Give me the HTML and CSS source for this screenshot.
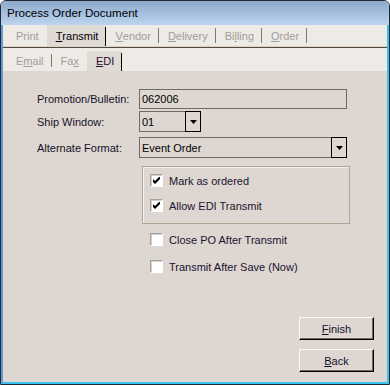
FILE: index.html
```html
<!DOCTYPE html>
<html lang="en">
<head>
    <meta charset="UTF-8">
    <meta name="viewport" content="width=device-width, initial-scale=1.0">
    <title>Process Order Document</title>
    <link rel="stylesheet" href="styles.css">
</head>
<body>
    <div class="window">
        <div class="titlebar">Process Order Document</div>
        <div class="frame">
            <div class="tabs tabs-main">
                <span class="tab disabled nosep">Print</span>
                <span class="tab active"><u>T</u>ransmit</span>
                <span class="tab disabled"><u>V</u>endor</span>
                <span class="tab disabled"><u>D</u>elivery</span>
                <span class="tab disabled">Bi<u>l</u>ling</span>
                <span class="tab disabled"><u>O</u>rder</span>
            </div>
            <div class="tabs-rule"></div>
            <div class="tabs tabs-sub">
                <span class="tab disabled">E<u>m</u>ail</span>
                <span class="tab disabled nosep">Fa<u>x</u></span>
                <span class="tab active"><u>E</u>DI</span>
            </div>

            <div class="content">
                <div class="row">
                    <label class="label">Promotion/Bulletin:</label>
                    <div class="field field-wide">062006</div>
                </div>
                <div class="row row-ship">
                    <label class="label">Ship Window:</label>
                    <div class="select select-short">
                        <span class="value">01</span>
                        <span class="drop"><svg width="7" height="4" viewBox="0 0 7 4"><path d="M0 0h7L3.5 4z" fill="#000"/></svg></span>
                    </div>
                </div>
                <div class="row row-format">
                    <label class="label">Alternate Format:</label>
                    <div class="select select-wide">
                        <span class="value">Event Order</span>
                        <span class="drop"><svg width="7" height="4" viewBox="0 0 7 4"><path d="M0 0h7L3.5 4z" fill="#000"/></svg></span>
                    </div>
                </div>

                <div class="group">
                    <div class="check">
                        <span class="box"><svg width="7" height="7" viewBox="0 0 7 7"><path d="M0 2v3l2 2 5-5v-3l-5 5z" fill="#000"/></svg></span>
                        <span>Mark as ordered</span>
                    </div>
                    <div class="check">
                        <span class="box"><svg width="7" height="7" viewBox="0 0 7 7"><path d="M0 2v3l2 2 5-5v-3l-5 5z" fill="#000"/></svg></span>
                        <span>Allow EDI Transmit</span>
                    </div>
                </div>

                <div class="check check-loose first">
                    <span class="box"></span>
                    <span>Close PO After Transmit</span>
                </div>
                <div class="check check-loose">
                    <span class="box"></span>
                    <span>Transmit After Save (Now)</span>
                </div>

                <div class="actions">
                    <button class="btn"><u>F</u>inish</button>
                    <button class="btn"><u>B</u>ack</button>
                </div>
            </div>
        </div>
    </div>
</body>
</html>
```

FILE: styles.css
```css
body {
    margin: 0;
    font-family: "Liberation Sans", Arial, sans-serif;
    font-size: 11px;
    color: #14102a;
    background-color: #ffffff;
}

.window {
    width: 390px;
    height: 385px;
    box-sizing: border-box;
    border: 1px solid #1f2a33;
    border-radius: 6px 6px 0 0;
    overflow: hidden;
    display: flex;
    flex-direction: column;
}

.titlebar {
    height: 24px;
    line-height: 24px;
    padding-left: 6px;
    font-size: 11.6px;
    color: #000;
    background: linear-gradient(#8da9cb, #bcd4ef);
}

.frame {
    flex: 1;
    display: flex;
    flex-direction: column;
    border-left: 2px solid #5f9bd6;
    border-right: 2px solid #36c4ee;
    border-bottom: 2px solid #36c4ee;
}

/* tab strips */
.tabs {
    display: flex;
    align-items: stretch;
    background-color: #eeeae5;
    padding-left: 4px;
}

.tabs-main {
    height: 21px;
    border-bottom: 1px solid #d8d2cc;
}

.tabs-rule {
    height: 1px;
    background-color: #56483b;
}

.tabs-sub {
    height: 20px;
    padding-top: 3px;
}

.tab {
    display: flex;
    align-items: center;
    padding: 0 8px 0 9px;
    position: relative;
}

.tab::after {
    content: "";
    position: absolute;
    right: 0;
    top: 3px;
    bottom: 3px;
    width: 1px;
    background-color: #7d7873;
}

.tabs-sub .tab::after {
    top: 3px;
    bottom: 4px;
}

.tab.nosep::after {
    display: none;
}

.tab.disabled {
    color: #a19d9c;
}

.tab.active {
    background-color: #e0dad4;
    color: #000;
}

.tab.active::after {
    top: 2px;
    bottom: 0;
    background-color: #000;
}

.tabs-sub .tab.active {
    color: #2a0b34;
}

/* form */
.content {
    flex: 1;
    background-color: #ded7d1;
    padding: 18px 13px 10px 34px;
    display: flex;
    flex-direction: column;
}

.row {
    display: flex;
    align-items: center;
}

.row-ship {
    margin-top: 2px;
}

.row-format {
    margin-top: 5px;
}

.label {
    width: 102px;
}

.field,
.select {
    box-sizing: border-box;
    border: 1px solid #6d6b69;
    color: #000;
}

.field {
    height: 20px;
    line-height: 18px;
    padding-left: 2px;
}

.field-wide,
.select-wide {
    width: 208px;
}

.select {
    height: 21px;
    display: flex;
    align-items: center;
}

.select-short {
    width: 62px;
}

.select .value {
    flex: 1;
    padding-left: 2px;
}

.drop {
    box-sizing: border-box;
    width: 16px;
    height: 21px;
    margin-right: -1px;
    border: 1px solid #000;
    display: flex;
    align-items: center;
    justify-content: center;
}

.group {
    width: 208px;
    box-sizing: border-box;
    margin: 8px 0 0 105px;
    height: 58px;
    border: 1px solid #b3a594;
    box-shadow: inset 1px 1px #f4f0ec;
    padding: 7px 0 0 7px;
}

.check {
    display: flex;
    align-items: center;
    gap: 6px;
    height: 13px;
    color: #1a1230;
}

.group .check + .check {
    margin-top: 12px;
}

.check-loose {
    margin-left: 113px;
    margin-top: 14px;
}

.check-loose.first {
    margin-top: 9px;
}

.box {
    box-sizing: border-box;
    width: 13px;
    height: 13px;
    background-color: #ffffff;
    border: 1px solid;
    border-color: #a5a19d #ffffff #ffffff #a5a19d;
    box-shadow: inset 1px 1px #d4d0cc;
    display: flex;
    align-items: center;
    justify-content: center;
}

.actions {
    margin-top: auto;
    align-self: flex-end;
    display: flex;
    flex-direction: column;
    gap: 9px;
}

.btn {
    width: 75px;
    height: 23px;
    box-sizing: border-box;
    background-color: #ded7d1;
    border: 1px solid;
    border-color: #fbf9f7 #000 #000 #fbf9f7;
    box-shadow: inset -1px -1px #6e6660;
    font-family: "Liberation Sans", Arial, sans-serif;
    font-size: 11px;
    color: #14102a;
    padding: 0;
}
```
